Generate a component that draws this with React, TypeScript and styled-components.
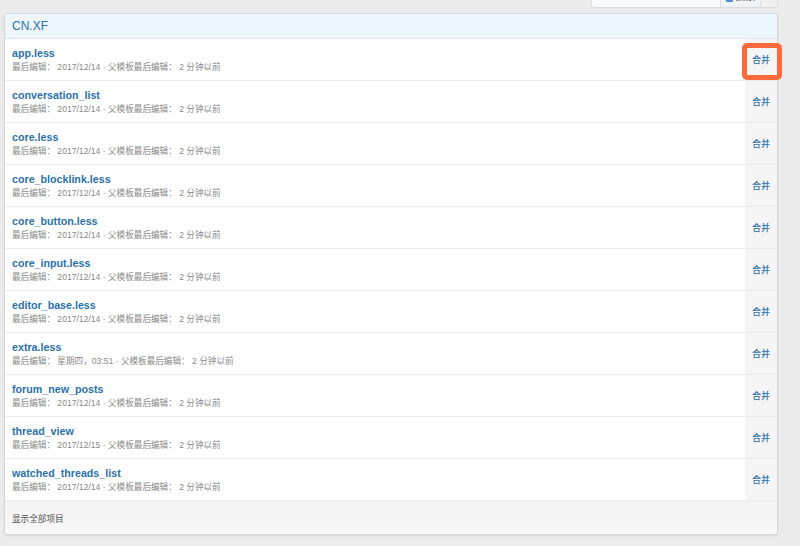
import React from "react";
import styled, { createGlobalStyle } from "styled-components";

const Global = createGlobalStyle`
  html, body { margin: 0; padding: 0; background: #ebebeb; }
  body { font-family: "Liberation Sans", "Noto Sans CJK SC", Arial, sans-serif; }
`;

const Page = styled.div`
  width: 800px;
  height: 546px;
  background: #ebebeb;
  padding: 0 22px 0 4px;
  box-sizing: border-box;
`;

const TopBar = styled.div`
  height: 8px;
  overflow: hidden;
  display: flex;
  justify-content: flex-end;
  align-items: flex-end;
  margin-bottom: 5px;
`;

const Search = styled.div`
  display: flex;
  height: 24px;
  border: 1px solid #dcdcdc;
  border-radius: 3px;
  background: #f7faff;
  box-sizing: border-box;
`;

const SearchInput = styled.div`
  width: 128px;
  border-right: 1px solid #e1e1e1;
`;

const SearchBtn = styled.div`
  width: 40px;
  background: #eef3f8;
  border-right: 1px solid #e1e1e1;
  display: flex;
  align-items: flex-end;
  justify-content: center;
  gap: 3px;
  padding-bottom: 5px;
  font-size: 10px;
  line-height: 10px;
  color: #555;
  box-sizing: border-box;
  span.icon { width: 7px; height: 8px; background: #4a90d0; border-radius: 1px; }
`;

const SearchMore = styled.div`
  width: 16px;
  background: #f0f0f0;
`;

const Panel = styled.div`
  width: 774px;
  border: 1px solid #d6d6d6;
  border-radius: 3px;
  background: #fff;
  box-shadow: 0 1px 2px rgba(0, 0, 0, 0.08);
  box-sizing: border-box;
`;

const Header = styled.div`
  height: 24px;
  background: #edf5fd;
  border-bottom: 1px solid #dfe5ea;
  display: flex;
  align-items: center;
  padding-left: 7px;
  font-size: 12px;
  color: #2b72ad;
  border-radius: 3px 3px 0 0;
`;

const Row = styled.div`
  display: flex;
  height: 42px;
  border-bottom: 1px solid #ececec;
  box-sizing: border-box;
`;

const Main = styled.div`
  flex: 1;
  display: flex;
  flex-direction: column;
  justify-content: center;
  padding-left: 7px;
  gap: 1px;
`;

const Name = styled.a`
  font-size: 10.7px;
  font-weight: bold;
  color: #2b72ad;
  text-decoration: none;
  line-height: 14px;
`;

const Meta = styled.div`
  font-size: 8.6px;
  color: #8a8a8a;
  line-height: 12px;
  white-space: nowrap;
`;

const Action = styled.div`
  width: 32px;
  background: #f5f5f5;
  display: flex;
  align-items: center;
  justify-content: center;
  font-size: 9px;
  font-weight: 500;
  color: #2f74ae;
  position: relative;
`;

const Highlight = styled.div`
  position: absolute;
  top: 4px;
  left: -3px;
  right: -5px;
  bottom: 0;
  border: 5px solid #fe6a3c;
  border-radius: 5px;
  pointer-events: none;
`;

const Footer = styled.div`
  height: 33px;
  background: linear-gradient(#f3f3f3, #f8f8f8);
  display: flex;
  align-items: center;
  padding-left: 7px;
  font-size: 8.6px;
  color: #505050;
  border-radius: 0 0 3px 3px;
`;

type Item = { name: string; date: string };

const items: Item[] = [
  { name: "app.less", date: "2017/12/14" },
  { name: "conversation_list", date: "2017/12/14" },
  { name: "core.less", date: "2017/12/14" },
  { name: "core_blocklink.less", date: "2017/12/14" },
  { name: "core_button.less", date: "2017/12/14" },
  { name: "core_input.less", date: "2017/12/14" },
  { name: "editor_base.less", date: "2017/12/14" },
  { name: "extra.less", date: "星期四，03:51" },
  { name: "forum_new_posts", date: "2017/12/14" },
  { name: "thread_view", date: "2017/12/15" },
  { name: "watched_threads_list", date: "2017/12/14" },
];

export default function App() {
  return (
    <Page>
      <Global />
      <TopBar>
        <Search>
          <SearchInput />
          <SearchBtn>
            <span className="icon" />
            <span>搜索</span>
          </SearchBtn>
          <SearchMore />
        </Search>
      </TopBar>
      <Panel>
        <Header>CN.XF</Header>
        {items.map((it, i) => (
          <Row key={it.name}>
            <Main>
              <Name href="#">{it.name}</Name>
              <Meta>
                最后编辑： {it.date} · 父模板最后编辑： 2 分钟以前
              </Meta>
            </Main>
            <Action>
              合并
              {i === 0 && <Highlight />}
            </Action>
          </Row>
        ))}
        <Footer>显示全部项目</Footer>
      </Panel>
    </Page>
  );
}
